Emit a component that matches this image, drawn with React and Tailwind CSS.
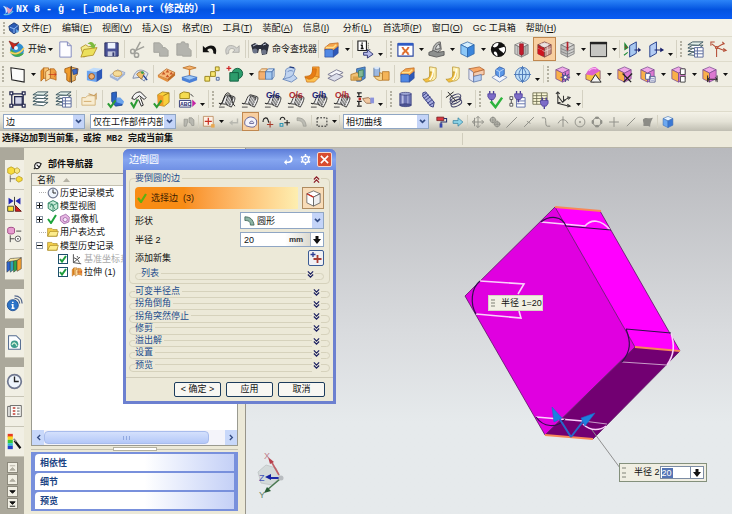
import clsx from "clsx";

/* ---------- icon helpers ---------- */

function Cube({ t = "#fff", l = "#ddd", r = "#bbb", s = "#555" }) {
  return (
    <g stroke={s} strokeWidth="0.8" strokeLinejoin="round">
      <path d="M10 2 17 5 10 8.500 3 5z" fill={t} />
      <path d="M3 5 10 8.500V18L3 14.500z" fill={l} />
      <path d="M17 5 10 8.500V18L17 14.500z" fill={r} />
    </g>
  );
}

const OrangeCube = () => <Cube t="#f0a8e8" l="#f9b04a" r="#dc78d0" s="#7a4a90" />;

function Sheets({ grid }) {
  return (
    <g fill="#fff" stroke="#3f5a62" strokeWidth="1">
      <path d="M2 15.500 7 13h11l-5 3.500z" />
      <path d="M2 12 7 9h11l-5 3.500z" />
      <path d="M2 8.500 7 5.500h11L13 9z" />
      <path d="M2 5 7 2h11l-5 3.500z" fill="#e4f0ea" />
      {grid && <path d="M9 8h9v10H9zM9 11.500h9M9 14.500h9M12 8v10" stroke="#5c6a9c" />}
    </g>
  );
}

function Curve({ label, color, tail }) {
  return (
    <g>
      <path d="M1 14c5 3 4-8 9-9l7 2c2 1 0 6-3 11l-6-3z" fill="#ececec" stroke="#333" />
      <path d="M10 6l6 2-4 9-4-3z" fill="#8c8c8c" stroke="#222" strokeWidth="0.8" />
      <path d="M9 8l5 7M11 7l4 6M8 11l4 6" stroke="#f4f4f4" strokeWidth="0.8" />
      <path d="M1 18h6" stroke="#444" />
      {tail && <path d="M2 16C5 16 6 4 10 3s4 12 8 14" stroke="#222" fill="none" />}
      {label && (
        <text x="2" y="8" fontSize="9" fontWeight="bold" fill={color} fontFamily="Liberation Sans, sans-serif">
          {label}
        </text>
      )}
    </g>
  );
}

const Flow = ({ d }) => <path d={d} fill="none" stroke="#8f8f88" strokeWidth="1.400" />;

const Plug = ({ x = 0, y = 0 }) => (
  <g transform={`translate(${x} ${y})`}>
    <path d="M1 3h8v3l-2 3H3L1 6z" fill="#7d6cc8" stroke="#4a3c96" strokeWidth="0.8" />
    <path d="M3 0v3M7 0v3M5 9v3" stroke="#4a3c96" strokeWidth="1.400" />
  </g>
);

const ICONS = {
  start: (
    <g>
      <circle cx="11" cy="11" r="7" fill="#2f8fd0" />
      <path d="M5 14c3 5 10 5 13 0-3 1-9 1-13-4z" fill="#46a846" />
      <path d="M4 13c4 3 10 2 14-4" stroke="#f4d060" strokeWidth="1.600" fill="none" />
      <path d="M3 2l4 8 6-7-4 2z" fill="#c8281e" stroke="#7c120c" strokeWidth="0.6" />
      <circle cx="10" cy="9" r="2" fill="#eaf6ff" />
    </g>
  ),
  newFile: <path d="M4 2h8l4 4v12H4zM12 2v4h4" fill="#fdfdff" stroke="#7f88c0" />,
  open: (
    <g stroke="#a8871c" strokeWidth="0.8">
      <path d="M2 8 7 5l3 2 6-1v7l-11 5z" fill="#f4ea8a" />
      <path d="M2 18 5 10l14-2-4 8z" fill="#ece05c" />
      <path d="M9 4c3-3 6-2 7 1l2-1-2 5-5-2 2-1c-1-1-2-2-4-2z" fill="#7cba3c" stroke="none" />
    </g>
  ),
  save: (
    <g>
      <path d="M3 3h14v14H3z" fill="#4a5296" stroke="#2a2f60" />
      <path d="M6 3h8v6H6z" fill="#eef4ff" />
      <path d="M6 12h8v5H6z" fill="#c8cce0" />
      <path d="M11 13h2v4h-2z" fill="#333a70" />
    </g>
  ),
  cut: (
    <g stroke="#a0a09a" strokeWidth="1.600" fill="none">
      <path d="M13 2 7 13M17 7 6 12" />
      <circle cx="5" cy="12" r="2.200" />
      <circle cx="9" cy="16" r="2.200" />
    </g>
  ),
  copy: <path d="M3 3h6l3 3v2h3l3 3v6H9v-4H3z" fill="#b4b4ae" stroke="#a4a49e" />,
  paste: <path d="M3 4h4l1-2h3l1 2h3v4l3 3v6H9v-1H3z" fill="#b4b4ae" stroke="#a4a49e" />,
  undo: <path d="M3 6v7h7L7.500 10.500c3-3 7-1.500 6.500 3.500l2.500 1c3-9-5.500-12-11-6.500z" fill="#111" />,
  redo: <path d="M17 6v7h-7l2.500-2.500c-3-3-7-1.500-6.500 3.500l-2.500 1c-3-9 5.500-12 11-6.500z" fill="#d0d0cc" stroke="#a4a4a0" strokeWidth="0.8" />,
  binoculars: (
    <g fill="#2b2f3c">
      <path d="M1 6l4-2 3 2h3l4-3 4 3-2 9-5 1-1-6H9l-1 4-5-1z" />
      <circle cx="5" cy="12" r="2.500" fill="#6c7488" />
      <circle cx="14" cy="13" r="2.500" fill="#6c7488" />
      <path d="M3 7l4-2M13 6l3-1" stroke="#c2c8d8" />
    </g>
  ),
  featureBox: (
    <g strokeWidth="0.7">
      <path d="M3 8 8 4l9-1v5l-4 3H3z" fill="#f6a44a" stroke="#b4601c" />
      <path d="M3 10c4 0 8-1 9 1v7H3z" fill="#5088e4" stroke="#2a4c9c" />
      <path d="M12 11 17 7v7l-5 4z" fill="#2c58b8" stroke="#2a4c9c" />
      <path d="M4 8h8l3-3" stroke="#ffe08a" fill="none" strokeWidth="1.600" />
    </g>
  ),
  info: (
    <g>
      <path d="M2 1h9v10H2z" fill="#fff" stroke="#222" strokeWidth="1.200" />
      <path d="M6.500 2.500v1.500M5 5.500h1.500V9M5 9h3" stroke="#111" strokeWidth="1.500" fill="none" />
      <path d="M8 13h4v-3l6 5-6 4v-3H8z" fill="#b8bcec" stroke="#2d3470" />
      <path d="M13 3v7h3" fill="none" stroke="#555" strokeDasharray="1 1" />
    </g>
  ),
  fit: (
    <g>
      <path d="M2 4h16v13H2z" fill="#fff" stroke="#2744a0" strokeWidth="1.200" />
      <path d="M2 3h16v3H2z" fill="#2f5bc4" />
      <path d="M7 8.500l6 6M13 8.500l-6 6" stroke="#e0702c" strokeWidth="2" />
      <path d="M6 8h2M12 8h2M6 15h2M12 15h2" stroke="#c8401c" />
    </g>
  ),
  section: (
    <g stroke="#555" strokeWidth="0.9">
      <path d="M6 12C6 6 10 2 14 2l1 8-4 3z" fill="#b8bab8" />
      <path d="M2 13l5-2 4 2 7-1v4l-8 2-8-2z" fill="#8d908e" />
      <path d="M9 10c0-3 2-5 4-6l1 5z" fill="#dcdedc" />
    </g>
  ),
  blueCube: <Cube t="#d4eefe" l="#8cc8f8" r="#3b86dc" s="#2b64a8" />,
  yinYang: (
    <g>
      <circle cx="10" cy="10" r="8" fill="#111" />
      <path d="M4 7c1-3 4-4 6-4 0 3-1 4-4 5zM10 9l6-2c2 2 1 5-1 7-1-2-3-2-5-5z" fill="#fff" />
      <path d="M6 12c2 0 3 2 3 5-2 0-4-2-4-4z" fill="#fff" />
    </g>
  ),
  redCube: (
    <g>
      <Cube t="#e8e8e6" l="#c8c8c6" r="#b0b0ae" s="#777" />
      <path d="M8 4h4v11l-2 1-2-1z" fill="#c41c2c" stroke="#7c0c18" strokeWidth="0.6" />
      <path d="M6 6v10M14 6v10" stroke="#888" strokeWidth="0.7" />
    </g>
  ),
  redSolid: (
    <g>
      <Cube t="#e4dcda" l="#c41c24" r="#c49890" s="#7c4040" />
      <path d="M3 9l7 3 7-3M6 3.500l7 3.500v9M14 3.500 7 7" stroke="#f4e8e4" strokeWidth="0.8" fill="none" opacity="0.8" />
      <path d="M3 9l5 2v6l-5-2.500z" fill="#d01420" />
    </g>
  ),
  greyCube: (
    <g>
      <Cube t="#dcdcda" l="#bcbcba" r="#cfcfcd" s="#777" />
      <path d="M3 9l7 3 7-3M3 12l7 3 7-3" stroke="#888" fill="none" />
      <path d="M10 2v9" stroke="#b4202a" strokeWidth="1.800" />
    </g>
  ),
  windowRect: (
    <g>
      <path d="M1.500 2.500h17v15h-17z" fill="#c6c6c2" stroke="#222" />
      <path d="M1 2h18v2.500H1z" fill="#222" />
    </g>
  ),
  doorIn: (
    <g>
      <path d="M7 6l7-4v12l-7 4z" fill="#a8c8f0" stroke="#26408c" />
      <path d="M12 10h4V8l3 2.500-3 2.500v-2h-4z" fill="#18206c" />
      <path d="M2 4v6l3-2zM5 13l-4 3" fill="#c02828" stroke="#1d8c38" strokeWidth="1.200" />
    </g>
  ),
  doorOut: (
    <g>
      <path d="M4 6l7-4v12l-7 4z" fill="#b4cdf4" stroke="#26408c" />
      <path d="M9 10h6V8l4 2.500-4 2.500v-2H9z" fill="#18206c" />
    </g>
  ),
  sheetList: <Sheets grid />,
  sheets: <Sheets />,
  csys: (
    <g stroke="#b44c34" strokeWidth="1.100" fill="none">
      <path d="M8 18V8l7-4M8 8 3 4M8 8l8 3M14 2l2 2-3 1M2 6V2h4M15 9l3 2-3 1" />
      <circle cx="8" cy="8" r="1.200" fill="#e89880" />
    </g>
  ),
  sketch: <path d="M3 3 17 5v13L4 15.500z" fill="#fcfcfa" stroke="#222" strokeWidth="1.100" />,
  extrude: (
    <g stroke="#a85c10" strokeWidth="0.7">
      <path d="M2 6l3-3v11l-3 3z" fill="#f09428" />
      <path d="M5 3h5v11H5z" fill="#fcc470" />
      <path d="M7 7l5-3v10l-5 3z" fill="#fcd898" />
      <path d="M12 4h4l2 3v9l-2-1-4-1z" fill="#f0a040" />
      <path d="M10 10h8l-2-2M18 10l-2 2" stroke="#c42c18" fill="none" />
    </g>
  ),
  revolve: (
    <g strokeWidth="0.8">
      <path d="M3 4l6-2v8l-1 8-3-2V9L3 8z" fill="#f09c2c" stroke="#96500c" />
      <path d="M9 2l8 2-1 6-2 2v4l-5 2z" fill="#e8b868" stroke="#96500c" />
      <path d="M11 5l5-1v5l-4 1z" fill="#3c68c4" stroke="#1c3c88" />
      <path d="M10 1v18" stroke="#333" />
    </g>
  ),
  hole: (
    <g>
      <path d="M2 6l10 1v11l-10-2z" fill="#6aa4f0" />
      <path d="M12 7l6-3v10l-6 4z" fill="#2c58b8" />
      <path d="M2 6l7-3 9 1-6 3z" fill="#c0dcfa" />
      <circle cx="7" cy="12" r="3" fill="#f0b070" stroke="#9c5420" />
    </g>
  ),
  boss: (
    <g>
      <path d="M2 11 10 5l8 3-8 7z" fill="#d0dcf0" stroke="#8c9cbc" strokeWidth="0.8" />
      <path d="M2 11v2l8 4 8-7V8l-8 7z" fill="#a0b4d8" />
      <ellipse cx="10" cy="9" rx="4.500" ry="3" fill="#f6dc98" stroke="#c89c50" />
    </g>
  ),
  sweep: (
    <g>
      <path d="M2 14C4 6 10 2 18 9l-4 8-5-4z" fill="#dfe4ee" stroke="#7f8ca8" />
      <path d="M6 10c2-3 5-4 8-1l-3 6-3-3z" fill="#f0c070" stroke="#8c6020" strokeWidth="0.8" />
      <path d="M13 11l4 5" stroke="#1c3c90" strokeWidth="1.400" />
      <circle cx="12" cy="8" r="1.500" fill="#3aa048" />
    </g>
  ),
  pattern: (
    <g>
      <path d="M1 11 10 4l9 4-8 7z" fill="#f8bc7c" stroke="#b46828" strokeWidth="0.8" />
      <path d="M1 11v2l10 5v-3z" fill="#e4903c" />
      <path d="M19 8v3l-8 7v-3z" fill="#c46c24" />
      <path d="M5 10l2-3 2 3zM9 8l2-3 2 3zM9 13l2-3 2 3zM13 10l2-3 2 3z" fill="#c85424" />
    </g>
  ),
  plane: (
    <g>
      <path d="M3 3l7-2 7 2-7 2z" fill="#f8b46c" stroke="#b46820" strokeWidth="0.8" />
      <path d="M10 4v9" stroke="#d4782c" strokeWidth="1.400" />
      <path d="M2 13l8-2 8 2-8 3z" fill="#9cc8f8" stroke="#3c6cbc" strokeWidth="0.8" />
      <path d="M2 13v3l8 3 8-3v-3l-8 3z" fill="#4a80d8" />
    </g>
  ),
  links: (
    <g>
      <path d="M5 15l9-10" stroke="#8c6020" strokeDasharray="2 1" />
      <path d="M2 12h5v5H2zM8 7h5v5H8zM13 2h4v4h-4z" fill="#f8e670" stroke="#98841c" />
      <path d="M14 13h3v3h-3z" fill="#d8e8f8" stroke="#50689c" />
    </g>
  ),
  unite: (
    <g>
      <circle cx="12" cy="9" r="5.500" fill="#2c9c6c" stroke="#146040" />
      <path d="M4 8h9v9H4z" fill="#2c9c6c" stroke="#146040" />
      <path d="M3 1v5M.5 3.500h5" stroke="#d02828" strokeWidth="1.300" />
    </g>
  ),
  trimBody: (
    <g strokeWidth="0.8">
      <path d="M2 7h7v8H2z" fill="#f4b070" stroke="#b4702c" />
      <path d="M2 7l3-3h6L9 7z" fill="#fcd8a8" stroke="#b4702c" />
      <path d="M9 7h7v8H9z" fill="#a4c8f0" stroke="#4870ac" />
      <path d="M9 7l3-3h6l-2 3zM16 7l2-3v8l-2 3z" fill="#d4e6fa" stroke="#4870ac" />
    </g>
  ),
  sheetBody: (
    <g stroke="#6484b8" strokeWidth="0.9">
      <path d="M6 5c4-4 8-2 10-1l-2 6 4 4-6 4-9-3c3-2 3-6 3-10z" fill="#c0d4f0" />
      <path d="M8 7c3-2 5-1 6 0M3 15c5-2 8-1 11-5" fill="none" />
      <path d="M10 2l5 1" stroke="#233c80" strokeWidth="1.400" />
    </g>
  ),
  flange: (
    <g stroke="#c46a10" strokeWidth="0.7">
      <path d="M10 2h7v11l-7 0z" fill="#f8a034" />
      <path d="M2 12l8-1 7 2-5 5H4z" fill="#fcc050" />
      <path d="M10 4c0 5-2 8-8 9l4 2c6 0 8-5 8-11z" fill="#e87c14" />
    </g>
  ),
  thicken: (
    <g fill="#f6f6fa" stroke="#7c7c94">
      <path d="M2 10l9-5 7 3-9 5z" />
      <path d="M2 14l9-5 7 3-9 5z" fill="#dcdeea" />
    </g>
  ),
  shell: (
    <g strokeWidth="0.8">
      <path d="M8 4l9-2v12l-5 3H8z" fill="#4f8cd0" stroke="#2b5490" />
      <path d="M2 10l6-2 5 2v6H2z" fill="#f0c074" stroke="#a87020" />
      <path d="M10 6l5-1v7l-5 1z" fill="#84b894" stroke="#3c7850" />
      <path d="M4 12h6v4H4z" fill="#d8a048" />
    </g>
  ),
  offset: (
    <g strokeWidth="0.8">
      <path d="M2 3h6v9H2z" fill="#9cb8e0" stroke="#50709c" />
      <path d="M11 7h7v9h-7z" fill="#f4b458" stroke="#b07020" />
      <path d="M2 12c3 4 6 5 9 4V9L8 8v4z" fill="#f8d48c" stroke="#b07020" />
      <ellipse cx="5" cy="3" rx="3" ry="1.500" fill="#dce8f8" />
    </g>
  ),
  face: (
    <g stroke="#b08818" strokeWidth="0.7">
      <path d="M9 2c3 0 5 1 7 1v9c0 3-3 5-7 5z" fill="#fdf0b0" />
      <path d="M2 15c5 0 8-2 8-8l3 1c0 6-3 10-8 10z" fill="#f4c040" />
      <path d="M13 4c0 5-1 9-4 12" fill="none" stroke="#fffbe8" strokeWidth="1.800" />
    </g>
  ),
  moveFace: (
    <g strokeWidth="0.8">
      <path d="M2 4l11-2 5 3-11 3z" fill="#f8a868" stroke="#b0602c" />
      <path d="M2 4l5 4v10l-5-3z" fill="#e8e8f4" stroke="#6c78a0" />
      <path d="M7 8l11-3v5L7 12z" fill="#f4ccb0" stroke="#b0602c" />
      <path d="M7 12l8-2v6l-8 2z" fill="#b8cef0" stroke="#5874ac" />
    </g>
  ),
  wrap: (
    <g strokeWidth="0.8">
      <path d="M2 13 9 9l9 4-8 5z" fill="#f4f6fc" stroke="#6c84b8" />
      <path d="M6 5l4-3 5 2v6l-5 3-4-3z" fill="#5c98e8" stroke="#2450a0" />
      <path d="M6 5l4 2v6M10 7l5-3" fill="none" stroke="#cfe2fa" />
    </g>
  ),
  sphere: (
    <g stroke="#4c78b8" strokeWidth="1">
      <circle cx="10" cy="10" r="7.500" fill="#c0e0f8" />
      <path d="M10 1v18M1 10h18M10 2.500c-5 5-5 10 0 15M10 2.500c5 5 5 10 0 15" fill="none" />
    </g>
  ),
  syncMove: (
    <g>
      <OrangeCube />
      <path d="M13 8v10M8 13h10M9.500 9.500l7 7M16.500 9.500l-7 7" stroke="#444c88" strokeWidth="1.100" />
      <circle cx="13" cy="13" r="2" fill="#fff" stroke="#444c88" />
    </g>
  ),
  syncPull: (
    <g>
      <path d="M2 10l5-5 10 1v9l-7 3-8-3z" fill="#f8c444" stroke="#7c4c6c" strokeWidth="0.8" />
      <path d="M2 10c2-6 6-8 10-8l5 4-8 5z" fill="#dc60d0" />
      <path d="M5 6c2-2 5-3 8-2" stroke="#f8b0f0" strokeWidth="1.500" />
      <path d="M7 18l5-8 6 8z" fill="#f4f4f4" stroke="#222" />
    </g>
  ),
  syncDelete: (
    <g>
      <OrangeCube />
      <path d="M8 9l9 9M18 9l-9 9" stroke="#222" strokeWidth="1.400" />
    </g>
  ),
  syncCopy: (
    <g>
      <OrangeCube />
      <path d="M8 9h5v6H8zM12 12h6v6h-6z" fill="#fff" stroke="#5c6494" />
      <path d="M13 14h4M13 16h4" stroke="#8890c0" />
    </g>
  ),
  syncGroup: (
    <g>
      <OrangeCube />
      <path d="M12 4h5v6h-5zM12 12h5v6h-5z" fill="#fff" stroke="#444" />
    </g>
  ),
  syncDim: (
    <g>
      <OrangeCube />
      <path d="M8 11v7M18 11v7M8 15h10M10 13l-2 2 2 2M16 13l2 2-2 2" stroke="#222" fill="none" />
    </g>
  ),
  nodes: (
    <g fill="#fff" stroke="#22264c" strokeWidth="1.300">
      <path d="M4 4h12v12H4z" fill="none" />
      <path d="M7 7h8v8H7z" fill="#d4d6e8" />
      <path d="M2 2h3v3H2zM15 2h3v3h-3zM2 15h3v3H2zM15 15h3v3h-3z" />
    </g>
  ),
  note: (
    <g>
      <path d="M2 8h4l2-2h8v10H2z" fill="#f8ecd0" stroke="#d4b47c" />
      <path d="M9 4l6 2 2-2v6" fill="none" stroke="#c89c5c" strokeWidth="1.200" />
      <path d="M4 12h8" stroke="#d4ac6c" />
    </g>
  ),
  checkBlue: (
    <g>
      <path d="M6 3l5-1v8l6 1v5l-7 1-4-5z" fill="#2c64c4" stroke="#143c84" strokeWidth="0.8" />
      <path d="M11 8h4l4 4-1 3-7-2z" fill="#6ca4ec" />
      <path d="M2 14l3 4 5-7" stroke="#2c9c34" strokeWidth="2.200" fill="none" />
    </g>
  ),
  checkHammer: (
    <g>
      <path d="M3 9c2-5 5-7 9-7l6 6-2 2-5-4-5 4z" fill="#f4f4f4" stroke="#222" />
      <path d="M12 8l3 8-2 1-3-7" stroke="#222" fill="#fff" />
      <path d="M2 13l3 5 4-8" stroke="#2c9c34" strokeWidth="2.200" fill="none" />
    </g>
  ),
  checkYellow: (
    <g>
      <path d="M6 5l5-3 7 1v10l-5 4-6-1z" fill="#f8d03c" stroke="#9c7810" strokeWidth="0.8" />
      <path d="M6 5l6 1v11l-6-1z" fill="#f09c28" />
      <path d="M12 6l6-3" stroke="#9c7810" />
      <path d="M2 14l3 4 5-7" stroke="#2c9c34" strokeWidth="2.200" fill="none" />
    </g>
  ),
  label: (
    <g>
      <path d="M2 4l4-2 6 1v6H2z" fill="#f4dc50" stroke="#9c8418" />
      <path d="M1.500 11h12v7h-12z" fill="#f8f8fc" stroke="#333c78" />
      <text x="2.200" y="17" fontSize="5.500" fontWeight="bold" fill="#22286c" fontFamily="Liberation Sans, sans-serif">ABC</text>
      <path d="M15 10l4 4-4 4z" fill="#c424a4" />
      <path d="M13 4l3 3" stroke="#333" />
    </g>
  ),
  curveTail: <Curve tail />,
  curve: <Curve />,
  curveBlue: <Curve label="G/s" color="#1c2478" />,
  curveRed: <Curve label="O/s" color="#b02c34" />,
  curveH: <Curve label="G/h" color="#1c2478" />,
  curveRedH: <Curve label="O/h" color="#b02c34" />,
  pick: (
    <g>
      <path d="M1 3h5M1 7h5M1 12h5M1 17h5M3 3v3M3 12v4" stroke="#222" strokeWidth="1.400" />
      <circle cx="4" cy="9.500" r="1.500" fill="#c42828" />
      <path d="M7 9l6-1 3 2v4h-5l-2-2z" fill="#f0c8a0" stroke="#8c6040" strokeWidth="0.8" />
      <path d="M15 8h4v6h-4z" fill="#8c94dc" />
    </g>
  ),
  cylinder: (
    <g stroke="#3a3f7c" strokeWidth="0.8">
      <path d="M4 4h12v12H4z" fill="#6c74b4" />
      <path d="M6 4h2v12H6zM12 4h1v12h-1z" fill="#b8bce4" stroke="none" />
      <ellipse cx="10" cy="4" rx="6" ry="1.500" fill="#a0a8d8" />
      <ellipse cx="10" cy="16" rx="6" ry="1.500" fill="#4c5494" />
    </g>
  ),
  spring: (
    <g stroke="#3a3f84" fill="none" strokeWidth="1">
      <path d="M4 3l3-1 9 11-1 5-3-1L4 7z" fill="#a4aadc" />
      <path d="M4 6l4-3M5 9l5-4M7 11l5-4M9 14l5-4M11 16l5-3" />
    </g>
  ),
  coil: (
    <g stroke="#3c3c64" fill="none" strokeWidth="1">
      <ellipse cx="11" cy="8" rx="6" ry="3" transform="rotate(-25 11 8)" />
      <ellipse cx="11" cy="11" rx="6" ry="3" transform="rotate(-25 11 11)" />
      <ellipse cx="12" cy="14" rx="6" ry="3" transform="rotate(-25 12 14)" />
      <path d="M3 2l9 10M1 8l8-6" stroke="#222" />
    </g>
  ),
  plugCheck: (
    <g>
      <Plug x={2} y={1} />
      <path d="M6 12l5 6 7-10" stroke="#2cb43c" strokeWidth="2.600" fill="none" />
    </g>
  ),
  plugTree: (
    <g>
      <path d="M9 8h9v10H9zM9 11.500h9M9 14.500h9" fill="#fff" stroke="#6474ac" />
      <path d="M2 7h3v3H2zM2 14h3v3H2zM3.500 10v4" fill="#fff" stroke="#555" />
      <Plug x={6} y={1} />
    </g>
  ),
  plugTable: (
    <g>
      <path d="M2 3h15v12H2zM2 6h15M2 9h15M2 12h15M6 3v12M11 3v12" fill="#fbf8d8" stroke="#6c6c50" strokeWidth="0.9" />
      <Plug x={9} y={8} />
    </g>
  ),
  axes: (
    <g stroke="#333" strokeWidth="1.100" fill="none">
      <path d="M4 2v12l12 3M4 14l12-6M4 6l5 7 6-5M2 4l2-2 2 2M10 6v7" />
      <path d="M14 15l3 2-3 1M14 7l3 1-2 2" />
    </g>
  ),
  /* selection bar */
  filter: <path d="M3 6h5v4l-2 6H3zM10 4h4l3 3v8h-3l-2-4h-2z" fill="#b8b8b0" stroke="#94948c" />,
  snap: (
    <g>
      <path d="M2 2h14v14H2z" fill="#fdf0e4" stroke="#b07848" />
      <path d="M9 4v10M4 9h10" stroke="#c82c20" strokeWidth="1.700" />
      <path d="M13 13h5v5h-5z" fill="#e8a850" />
    </g>
  ),
  back: <path d="M16 5v7H8v3L3 11l5-4v3h6V5z" fill="#b8b8b0" />,
  palette: (
    <g>
      <path d="M1 11c0-5 5-9 10-8s8 4 7 9-5 6-9 5-8-1-8-6z" fill="#f4f4fc" stroke="#54548c" strokeWidth="1.300" />
      <path d="M8 12c0-4 5-4 6-1M8 12h6" stroke="#54548c" fill="none" strokeWidth="1.300" />
    </g>
  ),
  hookRed: (
    <g fill="none" strokeWidth="1.600">
      <path d="M3 8c1-5 6-5 7-1l1 4" stroke="#222" />
      <path d="M13 9v9M8.500 13.500h9" stroke="#a83c2c" />
      <circle cx="3" cy="9" r="1" fill="#222" />
    </g>
  ),
  hookBlue: (
    <g fill="none" strokeWidth="1.500">
      <path d="M3 7c1-5 6-5 7 0" stroke="#222" />
      <path d="M13 7v8M9 11h8" stroke="#222" />
      <path d="M3 12h4v4H3z" stroke="#2c94b4" />
    </g>
  ),
  pipe: <path d="M3 4c8 0 12 3 13 12h-4C11 10 9 8 3 8z" fill="#bcbcb4" stroke="#98988f" />,
  marquee: <path d="M3 4h14v12H3z" fill="none" stroke="#222" strokeWidth="1.400" strokeDasharray="2.500 2" />,
  roller: (
    <g>
      <path d="M4 3h10v5H4z" fill="#d83840" stroke="#641418" />
      <path d="M14 5h4v5h-8v3" fill="none" stroke="#28306c" strokeWidth="1.500" />
      <path d="M8 12h4v6H8z" fill="#3848ac" />
    </g>
  ),
  arrowRight: <path d="M3 8h7V4l7 6-7 6v-4H3z" fill="#8cd4e8" stroke="#2c7c9c" />,
  moveAll: <path d="M10 2v16M2 10h16M7 5l3-3 3 3M7 15l3 3 3-3M5 7l-3 3 3 3M15 7l3 3-3 3M5 4v12" fill="none" stroke="#8f8f88" strokeWidth="1.400" />,
  gearGrey: (
    <g stroke="#8f8f88" fill="none" strokeWidth="1.500">
      <circle cx="7" cy="7" r="3.500" />
      <circle cx="13" cy="13" r="3.500" />
      <path d="M7 2v10M2 7h10M13 8v10M8 13h10" />
    </g>
  ),
  line: <Flow d="M3 17 17 3M2 18l3-3" />,
  midLine: <Flow d="M3 17 17 3M7 9l5 3" />,
  sCurve: <Flow d="M4 4h4c3 0 0 12 4 12h4" />,
  arcMid: <Flow d="M3 12c3-7 11-7 14 0M10 2v15" />,
  circleDot: (
    <g stroke="#8f8f88" fill="none" strokeWidth="1.300">
      <circle cx="10" cy="10" r="7" />
      <circle cx="10" cy="10" r="1" />
    </g>
  ),
  circleQuad: (
    <g stroke="#8f8f88" fill="none" strokeWidth="1.300">
      <circle cx="10" cy="10" r="6" />
      <path d="M8 3h4v2H8zM8 15h4v2H8zM3 8h2v4H3zM15 8h2v4h-2z" fill="#8f8f88" />
    </g>
  ),
  plus: <Flow d="M10 3v14M3 10h14" />,
  diag: <Flow d="M4 16 16 4" />,
  surface: <path d="M3 6c4-4 8 0 14-2-2 4-4 8-4 13-3-3-6 0-10-2 2-3-1-6 0-9z" fill="#8c8c86" />,
  smallCube: <Cube t="#e8f4fe" l="#6ca8f0" r="#3a78d4" s="#3c6cb4" />,
};

function Icon({ name, className = "size-[19px]" }) {
  return (
    <svg viewBox="0 0 20 20" fill="none" className={clsx("shrink-0", className)} aria-hidden="true">
      {ICONS[name]}
    </svg>
  );
}

/* ---------- toolbar parts ---------- */

const Caret = () => (
  <button className="flex w-2 shrink-0 items-center justify-center" aria-label="更多">
    <svg viewBox="0 0 5 3" className="h-[3px] w-[5px]"><path d="M0 0h5L2.500 3z" fill="#111" /></svg>
  </button>
);

const Overflow = () => (
  <button className="flex w-1.5 shrink-0 items-end justify-center pb-[5px]" aria-label="工具栏选项">
    <svg viewBox="0 0 5 3" className="h-[3px] w-[5px]"><path d="M0 0h5L2.500 3z" fill="#111" /></svg>
  </button>
);

const Sep = () => (
  <span className="flex w-[3px] shrink-0 justify-center py-[3px]">
    <span className="w-px bg-[#d4d1c2]" />
  </span>
);

const Grip = () => (
  <span className="flex w-1.5 shrink-0 justify-center py-1">
    <span className="border-l-2 border-dotted border-[#b4b1a2]" />
  </span>
);

function ToolItem({ item, small, active }) {
  if (item === "v") return <Caret />;
  if (item === ".") return <Overflow />;
  if (item === "|") return <Sep />;
  if (item.startsWith("t:")) {
    const [, icon, text] = item.split(":");
    return (
      <button className="flex shrink-0 items-center gap-0.5">
        <Icon name={icon} className="size-5" />
        {text}
      </button>
    );
  }
  return (
    <button
      aria-label={item}
      className={clsx(
        "flex shrink-0 items-center justify-center",
        small ? "w-[17px]" : "w-[23px]",
        active && "border border-[#c08850] bg-[#f8cfa0]"
      )}
    >
      <Icon name={item} className={small ? "size-[14px]" : "size-[19px]"} />
    </button>
  );
}

const ROWS = [
  [
    ["t:start:开始", "v", "newFile", "open", "save", "|", "cut", "copy", "paste", "|", "undo", "redo", "|", "|",
      "t:binoculars:命令查找器", "|", "featureBox", "v", "|", "info", "."],
    ["fit", "v", "section", "v", "blueCube", "v", "yinYang", "redCube", "redSolid", "greyCube", "v", "windowRect", "v", "|",
      "doorIn", "doorOut", "."],
    ["sheetList", "csys"],
  ],
  [
    ["sketch", "v", "extrude", "revolve", "hole", "boss", "sweep", "|", "pattern", "plane", "links", "unite", "v",
      "trimBody", "sheetBody", "flange", "thicken", "shell", "offset", "|", "featureBox", "face", "face", "moveFace",
      "wrap", "sphere", "."],
    ["syncMove", "v", "syncPull", "v", "syncDelete", "syncCopy", "v", "syncGroup", "v", "syncDim", "v", "syncMove"],
  ],
  [
    ["nodes", "sheets", "sheetList", "|", "note", "|", "checkBlue", "checkHammer", "checkYellow", "|", "label", "."],
    ["curveTail", "curve", "curveBlue", "curveRed", "curveH", "curveRedH", "pick", "."],
    ["cylinder", "spring", "|", "coil", "."],
    ["plugCheck", "plugTree", "plugTable", "axes", ".", "|"],
  ],
];

const MENUS = [
  ["文件", "F"], ["编辑", "E"], ["视图", "V"], ["插入", "S"], ["格式", "R"], ["工具", "T"], ["装配", "A"],
  ["信息", "I"], ["分析", "L"], ["首选项", "P"], ["窗口", "O"], ["GC 工具箱", ""], ["帮助", "H"],
];

function ToolRow({ bars }) {
  return (
    <div className="flex h-[25px] gap-0.5 overflow-hidden border-b border-[#dedbcb] bg-[#f0eee3]">
      {bars.map((bar, i) => (
        <div key={i} className="flex shrink-0">
          {i > 0 && <Sep />}
          <Grip />
          {bar.map((item, n) => (
            <ToolItem key={n} item={item} active={item === "redSolid"} />
          ))}
        </div>
      ))}
    </div>
  );
}

function ComboBox({ label, value, className, children }) {
  return (
    <span className={clsx("relative flex shrink-0 items-center border border-[#8fa6c4] bg-white", className)}>
      {children}
      <select aria-label={label} className="h-full w-full appearance-none bg-transparent pl-0.5 pr-3 outline-none">
        <option>{value}</option>
      </select>
      <span className="pointer-events-none absolute inset-y-0 right-0 flex w-[11px] items-center justify-center bg-[#c4d4f8]">
        <svg viewBox="0 0 8 6" className="h-[5px] w-[7px]"><path d="M1 1l3 3 3-3" fill="none" stroke="#344c84" strokeWidth="2" /></svg>
      </span>
    </span>
  );
}

function SelectionBar() {
  const small = (list) => list.map((item, i) => <ToolItem key={i} item={item} small active={item === "palette"} />);
  return (
    <div className="flex h-[19px] items-stretch overflow-hidden bg-linear-to-b from-[#f4f2e8] via-[#e4e2d6] to-[#bfbdb1] pl-[3px]">
      <ComboBox label="类型过滤器" value="边" className="my-0.5 w-[82px]" />
      <ComboBox label="选择范围" value="仅在工作部件内部" className="my-0.5 ml-[5px] w-[86px]" />
      <div className="ml-1 flex">{small(["filter", "|", "snap", "v", "back", "palette", "hookRed", "hookBlue", "pipe", "|", "marquee", "v", "|"])}</div>
      <ComboBox label="曲线规则" value="相切曲线" className="my-0.5 ml-0.5 w-[86px]" />
      <div className="ml-[3px] flex">
        {small(["roller", "arrowRight", "|", "moveAll", "gearGrey", "line", "midLine", "sCurve", "arcMid", "circleDot",
          "circleQuad", "plus", "diag", "surface", "|", "smallCube"])}
      </div>
    </div>
  );
}

/* ---------- resource bar ---------- */

const TAB_ICONS = {
  assembly: (
    <g stroke="#b09010" strokeWidth="0.8">
      <path d="M2 3l4-2 4 2v5l-4 2-4-2z" fill="#f8dc3c" />
      <path d="M10 4l3-2 3 2v3l-3 2-3-2z" fill="#f8e880" />
      <path d="M12 14l3-2 4 2v3l-4 2-3-2z" fill="#f8dc3c" />
      <path d="M5 11v8M5 15h6" stroke="#333" fill="none" />
    </g>
  ),
  constraint: (
    <g>
      <path d="M3 2l6 4-6 4zM17 2l-6 4 6 4z" fill="#2428b4" />
      <path d="M10 1v10" stroke="#222" />
      <path d="M2 12h7v6H2z" fill="#f8e030" stroke="#333" />
      <path d="M11 11v7h7z" fill="#d42020" stroke="#5c0c0c" />
    </g>
  ),
  part: (
    <g>
      <path d="M2 3c1-2 7-2 8 0v5c-1 2-7 2-8 0z" fill="#e89cd0" stroke="#98407c" />
      <path d="M5 11v8M5 15h5M12 6h6" stroke="#333" />
      <circle cx="14" cy="15" r="3.200" fill="#fff" stroke="#444" />
      <circle cx="14" cy="15" r="1" fill="#444" />
    </g>
  ),
  library: (
    <g stroke="#333" strokeWidth="0.6">
      <path d="M1 7l4-3v12l-4 3z" fill="#2c64d0" />
      <path d="M5 6l4-3v13l-4 3z" fill="#2ca0c0" />
      <path d="M9 6l4-3v13l-4 3z" fill="#30a848" />
      <path d="M13 5l5-3v13l-5 3z" fill="#f4a030" />
      <path d="M1 7l4-4 13-1-5 3z" fill="#fbe8a0" />
    </g>
  ),
  web: (
    <g>
      <circle cx="8" cy="12" r="6.500" fill="#2c74c8" stroke="#1c4c90" />
      <path d="M8 8v1.500M6.500 11.500H8v4M6.500 15.500h3.500" stroke="#fff" strokeWidth="1.800" />
      <path d="M10 4c4 0 6 3 6 6M10 1c6 0 9 4 9 9" stroke="#54688c" strokeWidth="1.500" fill="none" />
    </g>
  ),
  page: (
    <g>
      <path d="M3 2h9l5 5v11H3z" fill="#fbfdff" stroke="#546c90" strokeWidth="1.200" />
      <circle cx="10" cy="12" r="4.500" fill="#3c9c8c" />
      <path d="M7 13c2-4 4-3 6 1" stroke="#d8f4d8" fill="none" strokeWidth="1.400" />
    </g>
  ),
  clock: (
    <g>
      <circle cx="10" cy="10" r="8" fill="#eef4fc" stroke="#707890" strokeWidth="2" />
      <path d="M10 4v6h5" stroke="#222" strokeWidth="1.600" />
    </g>
  ),
  roles: (
    <g stroke="#555">
      <path d="M2 4h5v12H2z" fill="#f4f4f0" />
      <path d="M5 3h13v13H5z" fill="#fbfbf8" />
      <path d="M8 6h3M8 9.500h3M8 13h3" stroke="#c03c30" strokeWidth="1.800" />
      <path d="M13 6h3M13 9.500h3M13 13h3" stroke="#444" />
    </g>
  ),
  palette: (
    <g>
      <path d="M2 1h6v4H2z" fill="#e83c20" />
      <path d="M2 4h6v4H2z" fill="#f8d820" />
      <path d="M2 8h6v4H2z" fill="#38c838" />
      <path d="M2 12h6v3H2z" fill="#28c0d0" />
      <path d="M2 15h6v4H2z" fill="#2440c8" />
      <path d="M10 9l7 9" stroke="#111" strokeWidth="2.600" />
      <path d="M9 7l3 3" stroke="#888" strokeWidth="2" />
    </g>
  ),
};

const TAB_GROUPS = [["assembly", "constraint", "part", "library"], ["web"], ["page"], ["clock", "roles", "palette"]];

function ResourceBar() {
  return (
    <nav className="flex w-6 shrink-0 flex-col gap-[9px] bg-[#aba89b] pl-[5px] pt-3" aria-label="资源条">
      {TAB_GROUPS.map((group) => (
        <div key={group[0]} className="flex flex-col">
          {group.map((name) => (
            <button key={name} aria-label={name} className="flex h-[30px] items-center justify-center border-b border-[#c8c5b6] bg-[#f1efe4]">
              <svg viewBox="0 0 20 20" fill="none" className="size-[17px]" aria-hidden="true">{TAB_ICONS[name]}</svg>
            </button>
          ))}
        </div>
      ))}
      <div className="-mt-1 flex w-[13px] flex-col gap-px pl-0.5">
        {["M2 2h6M5 4 2 7h6z", "M5 3 2 6h6z", "M2 3h6L5 6z", "M2 2h6L5 5zM2 7h6"].map((d, i) => (
          <button key={d} aria-label="滚动" className="flex h-[11px] items-center justify-center border border-[#8c897c] bg-[#f1efe4]">
            <svg viewBox="0 0 10 9" className="h-2 w-[9px]">
              <path d={d} fill={i < 2 ? "#b0ada0" : "#111"} stroke={i < 2 ? "#b0ada0" : "#111"} />
            </svg>
          </button>
        ))}
      </div>
    </nav>
  );
}

/* ---------- part navigator ---------- */

const TREE_ICONS = {
  clock: TAB_ICONS.clock,
  views: (
    <g>
      <path d="M10 1l8 4v9l-8 5-8-5V5z" fill="#c8ecd8" stroke="#2c8460" strokeWidth="1.600" />
      <path d="M2 5l8 4 8-4M10 9v10M5 12l3-6 5 9" stroke="#2c8460" fill="none" strokeWidth="1.300" />
    </g>
  ),
  camera: (
    <g stroke="#8c4c94" strokeWidth="1.100">
      <path d="M4 6l9-4 6 5-1 8-8 3-6-5z" fill="#e8b8e4" />
      <circle cx="12" cy="11" r="3.500" fill="#f6ecfa" />
    </g>
  ),
  folder: (
    <g stroke="#a07c14">
      <path d="M1 4h7l2 2h7v11H1z" fill="#f4d04c" />
      <path d="M1 17l4-8h14l-3 8z" fill="#fcec8c" />
    </g>
  ),
  datum: <path d="M4 2v14l13 2M4 16l11-9M5 8l6 3 3 5M10 5l2 3" stroke="#444" strokeWidth="1.500" fill="none" />,
  extrude: ICONS.extrude,
};

const TREE = [
  { icon: "clock", text: "历史记录模式" },
  { icon: "views", text: "模型视图", box: "+" },
  { icon: "camera", text: "摄像机", box: "+", tick: true },
  { icon: "folder", text: "用户表达式" },
  { icon: "folder", text: "模型历史记录", box: "-" },
  { icon: "datum", text: "基准坐标系", check: true, dim: true },
  { icon: "extrude", text: "拉伸 (1)", check: true },
];

function TreeRow({ icon, text, box, tick, check, dim }) {
  return (
    <li className={clsx("flex items-center gap-px", check && "pl-[26px]", dim && "text-[#a8a8a8]")}>
      {!check && (
        <span className="flex w-[14px] shrink-0 items-center pl-1">
          {box ? (
            <button aria-label="展开" className="flex size-[7px] items-center justify-center border border-[#8c98a8] bg-white">
              <svg viewBox="0 0 5 5" className="size-[5px]">
                <path d={box === "+" ? "M0 2.500h5M2.500 0v5" : "M0 2.500h5"} stroke="#111" />
              </svg>
            </button>
          ) : (
            <span className="ml-[3px] w-2 border-t border-dotted border-[#b0b0b0]" />
          )}
        </span>
      )}
      {check && (
        <span className="relative mr-0.5 flex shrink-0">
          <input type="checkbox" defaultChecked aria-label={text} className="peer size-[10px] appearance-none border border-[#1d4f6c] bg-white" />
          <svg viewBox="0 0 10 10" className="pointer-events-none absolute inset-0 hidden size-[10px] peer-checked:block">
            <path d="M2 5l2 2.500L8 2" fill="none" stroke="#1c9c3c" strokeWidth="2" />
          </svg>
        </span>
      )}
      {tick && (
        <svg viewBox="0 0 10 10" className="size-[10px] shrink-0"><path d="M1 5l3 4 5-8" fill="none" stroke="#1ca43c" strokeWidth="2" /></svg>
      )}
      <svg viewBox="0 0 20 20" fill="none" className="size-3 shrink-0" aria-hidden="true">{TREE_ICONS[icon]}</svg>
      <span className="whitespace-pre">{text}</span>
    </li>
  );
}

function Navigator() {
  return (
    <section className="flex w-[221px] shrink-0 flex-col bg-[#ece9d8] px-[7px] pb-[3px]">
      <h2 className="flex h-[25px] items-end gap-1.5 pb-[3px] pl-0.5 font-bold">
        <svg viewBox="0 0 10 10" className="size-[9px]">
          <path d="M2 7c-1-4 2-6 5-5l2 1-2 4c-2 2-4 2-5 0zM1 9l2-2M4 4l3 3" fill="#fff" stroke="#222" strokeWidth="1.300" />
        </svg>
        部件导航器
      </h2>
      <div className="flex min-h-0 flex-1 flex-col border border-[#9a9a90] bg-white">
        <div className="flex h-3 shrink-0 items-center gap-2 border-b border-[#c4c1b2] bg-[#efede1] pl-[5px]">
          名称
          <svg viewBox="0 0 7 4" className="h-1 w-[7px]"><path d="M0 4h7L3.500 0z" fill="#b4b1a4" /></svg>
        </div>
        <ul className="grid h-[93px] grid-rows-7 overflow-hidden">
          {TREE.map((row) => (
            <TreeRow key={row.text} {...row} />
          ))}
        </ul>
        <div className="mt-auto flex h-[15px] items-stretch bg-[#f4f4fa]">
          <button aria-label="向左滚动" className="flex w-3 items-center justify-center bg-[#c8d8fa]">
            <svg viewBox="0 0 6 8" className="h-[7px] w-[5px]"><path d="M5 1 2 4l3 3" fill="none" stroke="#344c84" strokeWidth="1.600" /></svg>
          </button>
          <div className="my-px flex flex-1 pr-4">
            <div className="flex flex-1 items-center justify-center gap-0.5 rounded-sm border border-[#a8bcec] bg-linear-to-b from-[#d4e0fc] to-[#b4c8f8]">
              {[0, 1, 2].map((n) => <span key={n} className="h-1 w-px bg-[#90a8e0]" />)}
            </div>
          </div>
          <button aria-label="向右滚动" className="flex w-3 items-center justify-center bg-[#c8d8fa]">
            <svg viewBox="0 0 6 8" className="h-[7px] w-[5px]"><path d="M1 1l3 3-3 3" fill="none" stroke="#344c84" strokeWidth="1.600" /></svg>
          </button>
        </div>
      </div>
      <div className="flex h-1.5 shrink-0 items-center">
        <span className="h-px flex-1 bg-[#c4c1b0]" />
        <span className="h-1 w-[44px] border border-[#b4b1a0] bg-white" />
        <span className="h-px flex-1 bg-[#c4c1b0]" />
      </div>
      <div className="flex shrink-0 flex-col gap-0.5 border-2 border-l-4 border-r-4 border-[#7890dc] bg-[#7890dc] font-bold text-[#1c4484]">
        {["相依性", "细节", "预览"].map((name) => (
          <button key={name} className="flex h-[17px] items-center rounded-tl-sm bg-linear-to-r from-white from-55% to-[#c4d0f6] pl-[5px]">
            {name}
          </button>
        ))}
      </div>
    </section>
  );
}

/* ---------- edge blend dialog ---------- */

function Chevrons({ up }) {
  return (
    <svg viewBox="0 0 8 8" className="size-[7px]" aria-hidden="true">
      <path d={up ? "M1 4l3-3 3 3M1 7.500l3-3 3 3" : "M1 .5l3 3 3-3M1 4l3 3 3-3"} fill="none" stroke={up ? "#8c1c28" : "#1c2060"} strokeWidth="1.400" />
    </svg>
  );
}

function Group({ title, up, className, children }) {
  return (
    <fieldset className={clsx("relative min-w-0 rounded-sm border border-[#d6d2bc] px-[5px]", className)}>
      <legend className="h-3 pr-0.5 text-[#1c4c8c]">{title}</legend>
      <button aria-label={title} className="absolute -top-[11px] right-2 flex h-3 items-center bg-[#ece9d8] px-px">
        <Chevrons up={up} />
      </button>
      {children}
    </fieldset>
  );
}

const COLLAPSED = ["可变半径点", "拐角倒角", "拐角突然停止", "修剪", "溢出解", "设置", "预览"];

function DownArrow() {
  return <svg viewBox="0 0 8 8" className="size-2"><path d="M2.500 0h3v3H8L4 8 0 3h2.500z" fill="#111" /></svg>;
}

function EdgeBlendDialog() {
  return (
    <div role="dialog" aria-label="边倒圆" className="absolute left-[123px] top-px flex w-[213px] flex-col rounded-t-md border-[3px] border-t-0 border-[#6c80d0] bg-[#ece9d8] pb-1">
      <header className="-mx-[3px] flex h-[21px] items-center gap-1.5 rounded-t-md bg-linear-to-b from-[#5c7cd8] via-[#86a6f0] to-[#7090e4] pl-1.5 pr-1 text-white">
        <h1 className="mr-auto text-[10px]">边倒圆</h1>
        <button aria-label="重置">
          <svg viewBox="0 0 12 12" className="size-[11px]"><path d="M7 2c4 2 3 7-1 7H3" fill="none" stroke="#fff" strokeWidth="1.800" /><path d="M4 6v6L1 9z" fill="#fff" /></svg>
        </button>
        <button aria-label="选项">
          <svg viewBox="0 0 12 12" className="size-[11px]">
            <circle cx="6" cy="6" r="3.500" fill="none" stroke="#fff" strokeWidth="1.600" />
            <circle cx="6" cy="6" r="1" fill="#fff" />
            <path d="M6 0v2M6 10v2M1 3l2 1M9 8l2 1M1 9l2-1M9 4l2-1" stroke="#fff" strokeWidth="1.600" />
          </svg>
        </button>
        <button aria-label="关闭" className="flex size-[15px] items-center justify-center rounded-xs border border-[#f4d8d0] bg-[#d84c30]">
          <svg viewBox="0 0 10 10" className="size-[9px]"><path d="M1 1l8 8M9 1l-8 8" stroke="#fff" strokeWidth="1.800" /></svg>
        </button>
      </header>

      <div className="flex flex-col px-[3px] pt-0.5">
        <Group title="要倒圆的边" up className="pb-[3px]">
          <div className="flex flex-col gap-[3px] pt-[3px]">
            <div className="flex h-[22px] justify-between">
              <div className="flex w-[163px] items-center gap-1 rounded-l-sm bg-linear-to-r from-[#f88c14] from-30% to-[#fdeeb0] pl-0.5">
                <svg viewBox="0 0 10 10" className="size-[10px]"><path d="M1 5l3 4 5-8" fill="none" stroke="#5cb010" strokeWidth="2.200" /></svg>
                <span className="text-[#3c2000]">选择边&nbsp; (3)</span>
              </div>
              <button aria-label="边" className="flex w-[22px] items-center justify-center border border-[#b08c60] bg-[#f8dcb8]">
                <svg viewBox="0 0 20 20" className="size-[19px]">
                  <Cube t="#fff" l="#fff" r="#eee" s="#555" />
                  <path d="M3 5l7 3.500" stroke="#d03020" strokeWidth="1.400" />
                </svg>
              </button>
            </div>
            <div className="flex h-[17px] items-center justify-between">
              <span>形状</span>
              <ComboBox label="形状" value="圆形" className="h-full w-[84px] pl-[3px]">
                <svg viewBox="0 0 12 12" className="size-[11px] shrink-0"><path d="M1 2c6 0 9 3 10 9H7C7 7 5 6 1 6z" fill="#8cb4a4" stroke="#486c60" /></svg>
              </ComboBox>
            </div>
            <div className="flex h-[15px] items-center justify-between">
              <label htmlFor="radius">半径 2</label>
              <span className="flex h-full w-[84px] border border-[#8fa6c4] bg-white">
                <input id="radius" defaultValue="20" className="w-11 min-w-0 pl-[3px] text-[9px] outline-none" />
                <span className="flex flex-1 items-center bg-linear-to-r from-white to-[#dcdad0] pl-1 text-[8px] font-bold text-[#333]">mm</span>
                <button aria-label="半径选项" className="flex w-[13px] items-center justify-center border-l border-[#a8b4c4]"><DownArrow /></button>
              </span>
            </div>
            <div className="flex h-4 items-center justify-between">
              <span>添加新集</span>
              <button aria-label="添加新集" className="flex size-4 items-center justify-center rounded-xs border border-[#3c5c94] bg-[#f0f0f4]">
                <svg viewBox="0 0 12 12" className="size-3">
                  <path d="M7.500 3v8M3.500 7h8" stroke="#a83c34" strokeWidth="1.800" />
                  <path d="M3 0v5M.5 2.500h5" stroke="#2c3c94" strokeWidth="1.300" />
                </svg>
              </button>
            </div>
            <Group title="列表" className="-mt-0.5 h-[13px]" />
          </div>
        </Group>
        <div className="grid h-[87px] grid-rows-7 pt-px">
          {COLLAPSED.map((title) => <Group key={title} title={title} className="h-3" />)}
        </div>
      </div>

      <footer className="mt-1.5 flex justify-end gap-[5px] border-t border-[#cfcbb8] pr-2 pt-1">
        {["< 确定 >", "应用", "取消"].map((name) => (
          <button key={name} className="h-[15px] w-[47px] rounded-xs border border-[#1c3c5c] bg-[#f8f7f2] leading-[13px]">{name}</button>
        ))}
      </footer>
    </div>
  );
}

/* ---------- graphics window ---------- */

function Model() {
  return (
    <svg viewBox="246 148 486 366" className="h-[366px] w-[486px]" fill="none">
      <path d="M555 207 465 296 545 435 635 347z" fill="#e000e0" />
      <path d="M555 207 600 211 680 351 635 347z" fill="#ff00ff" />
      <path d="M635 347 680 351 593 439 545 435z" fill="#720072" />
      <path d="M555 207 465 296 545 435M555 207 635 347 545 435M600 211l80 140-87 88" stroke="#5c1464" strokeWidth="0.8" />
      <path d="M555 207l46 4M635 347l45 4M545 435l48 4" stroke="#f88858" strokeWidth="2" />

      {/* blend preview */}
      <g stroke="#fbd0fb" strokeWidth="1.600">
        <path d="M541 222l44 4c6-7 16-7 25 4" />
        <path d="M480 281l44 3-6 10M476 314l45 4-2-7" />
        <path d="M671 333c4 13 3 22-4 32" />
        <path d="M536 417l47 4M583 424c8 8 18 6 23 2" />
      </g>
      <path d="M622 362l45 3M583 421l24 3" stroke="#c89cc8" />
      <g stroke="#30104c" strokeWidth="1.200">
        <path d="M541 222c9-7 21-6 25 4l45 4" />
        <path d="M480 281c-9 7-10 23-4 33" />
        <path d="M626 329l45 4M626 329c5 13 5 22-4 33" />
        <path d="M536 417c7 10 21 12 29 2" />
      </g>

      {/* drag handles */}
      <path d="M571 437l-12-19M571 437l13-17" stroke="#2868c8" strokeWidth="2" />
      <path d="M552 407l10 11-8 4zM595 413l-14 5 4 8z" fill="#1c80e0" stroke="#1c6cc8" strokeWidth="0.6" />
      <path d="M592 430l28 38" stroke="#909090" />

      {/* view triad */}
      <path d="M258 472l8-7 10 3 4 9-8 8-11-2z" fill="#d4dada" stroke="#c4caca" />
      <path d="M279 475l-8-14" stroke="#c06068" strokeWidth="1.600" />
      <path d="M268 457l6 5-4 2z" fill="#b8404c" />
      <path d="M280 479l-13 11" stroke="#487850" strokeWidth="1.600" />
      <path d="M264 493l3-6 4 4z" fill="#285c34" />
      <path d="M281 478h-11" stroke="#1c28a8" strokeWidth="2" />
      <path d="M265 477l6-3v6z" fill="#1420a0" />
      <circle cx="281" cy="478" r="2.500" fill="#b8bcc0" />
      <g fontSize="9" fontFamily="Liberation Sans, sans-serif">
        <text x="264" y="459" fill="#c0808c">X</text>
        <text x="259" y="481" fill="#4454b8">Z</text>
        <text x="259" y="498" fill="#608068">Y</text>
      </g>
    </svg>
  );
}

const TagGrip = () => <span className="mx-0.5 my-[3px] shrink-0 border-x-2 border-dotted border-[#b8b8ac]" />;

function Viewport() {
  return (
    <main className="relative min-w-0 flex-1 overflow-hidden border-l border-[#98958a] bg-linear-to-b from-[#b8b9bd] via-[#d9dbde] to-[#e6eaec] to-75%">
      <Model />
      <div className="absolute left-[242px] top-[147px] flex h-4 w-[55px] items-stretch border border-[#d8d5c4] bg-[#f2f0e4]">
        <TagGrip />
        <span className="whitespace-nowrap pl-1 leading-[14px]">半径 1=20</span>
      </div>
      <div className="absolute left-[373px] top-[315px] flex h-[19px] w-[88px] items-stretch border border-[#84907c] bg-[#f0eee2]">
        <TagGrip />
        <label htmlFor="drag-radius" className="whitespace-nowrap pl-1.5 leading-[17px]">半径 2</label>
        <span className="my-0.5 mr-0.5 flex flex-1 border border-[#7c8ca4] bg-white">
          <span className="flex min-w-0 flex-1 items-center pl-px">
            <input id="drag-radius" defaultValue="20" className="h-[10px] w-[11px] bg-[#5474b4] text-[9px] text-white outline-none" />
          </span>
          <button aria-label="半径选项" className="flex w-[13px] items-center justify-center border-l border-[#7c8ca4]"><DownArrow /></button>
        </span>
      </div>
    </main>
  );
}

export default function App() {
  return (
    <div className="flex min-h-screen flex-col overflow-hidden bg-[#ece9d8] font-['Liberation_Sans','Noto_Sans_CJK_SC',sans-serif] text-[9px] leading-3 text-[#111]">
      <header className="flex h-[19px] items-center gap-0.5 bg-linear-to-b from-[#2c84f8] via-[#0453e0] to-[#0a5cf4] pl-0.5 font-['Liberation_Mono','Noto_Sans_CJK_SC',monospace] text-[10px] font-bold text-white">
        <svg viewBox="0 0 14 14" className="size-3" aria-hidden="true">
          <path d="M1 2c4 1 6 3 6 6L4 12C5 8 4 5 1 2z" fill="#c8e8ff" />
          <path d="M5 3l5 3 3-3-2 6-4 3z" fill="#e49cc0" />
          <path d="M2 12c4 1 8 0 11-4" stroke="#60c0e8" strokeWidth="1.500" fill="none" />
        </svg>
        <span className="whitespace-pre">NX 8 - ġ - [_modela.prt（修改的） ]</span>
      </header>

      <nav className="flex h-[18px] items-center gap-2.5 border-b border-[#dedbcb] bg-[#f3f1e7]" aria-label="菜单">
        <span className="-mr-2 flex items-center gap-[3px] pl-[3px]">
          <span className="h-3 border-l-2 border-dotted border-[#b4b1a2]" />
          <svg viewBox="0 0 14 14" className="size-3" aria-hidden="true">
            <path d="M1 5l6-4 5 3v6l-5 4-5-4z" fill="#2c5cb4" stroke="#143470" />
            <path d="M2 6l5 2 5-4M7 8v5" stroke="#9cc4f4" fill="none" />
            <path d="M9 8l4 3-3 2z" fill="#70b0e8" />
          </svg>
        </span>
        {MENUS.map(([name, key]) => (
          <button key={name} className="min-w-[30px] shrink-0 whitespace-nowrap text-left">
            {name}
            {key && <>(<u>{key}</u>)</>}
          </button>
        ))}
      </nav>

      {ROWS.map((bars, i) => <ToolRow key={i} bars={bars} />)}
      <SelectionBar />

      <div className="flex h-[17px] items-center border-b border-[#b8b5a8] bg-[#edeadb] pl-0.5 font-['Liberation_Mono','Noto_Sans_CJK_SC',monospace] font-bold">
        <p className="w-[461px] border-r border-[#d0cdbc]">选择边加到当前集，或按 MB2 完成当前集</p>
      </div>

      <div className="relative flex min-h-0 flex-1">
        <ResourceBar />
        <Navigator />
        <Viewport />
        <EdgeBlendDialog />
      </div>
    </div>
  );
}
